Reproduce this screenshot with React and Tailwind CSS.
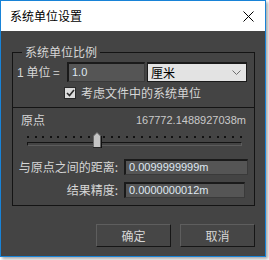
import React from 'react';

const cjk = { fontFamily: '"Noto Sans CJK SC", "Noto Sans", sans-serif' };
const num = { fontFamily: '"Liberation Sans", Arial, sans-serif' };

const ticks = Array.from({ length: 29 });

const App = () => {
  return (
    <div className="w-[269px] h-[260px] bg-white" style={cjk}>
      <div className="w-[266px] h-[257px] flex flex-col border border-[#1883d7] bg-[#444444] shadow-[2px_2px_3px_rgba(0,0,0,0.35)]">
        {/* title bar */}
        <div className="h-[30px] bg-white flex items-center justify-between">
          <span className="pl-[9px] text-[12px] leading-[16px] text-black">系统单位设置</span>
          <svg width="11" height="11" viewBox="0 0 11 11" className="mr-[11px]">
            <path d="M0.5 0.5 L10.5 10.5 M10.5 0.5 L0.5 10.5" stroke="#000" strokeWidth="1" fill="none" />
          </svg>
        </div>

        {/* body */}
        <div className="flex-1 flex flex-col pl-[11px] pr-[10px]">
          <fieldset className="mt-[13px] border border-[#141414] pb-[7px]">
            <legend className="ml-[9px] px-[3px] text-[12px] leading-[16px] text-[#d6d6d6]">系统单位比例</legend>

            <div className="mt-[2px] h-[20px] flex items-center">
              <span className="w-[54px] pl-[4px] text-[12px] leading-[16px] text-[#d6d6d6] whitespace-nowrap">
                <span style={num}>1</span> 单位 =
              </span>
              <div className="w-[78px] h-[20px] flex items-center bg-[#555555] border-t-2 border-l-2 border-[#1a1a1a] border-r border-b border-r-[#3a3a3a] border-b-[#3a3a3a] pl-[3px]">
                <span className="text-[11px] text-[#dfe8f2]" style={num}>1.0</span>
              </div>
              <div className="ml-[2px] w-[100px] h-[20px] flex items-center justify-between bg-[#e3e3e3] border border-[#1a1a1a] border-t-2 pl-[3px] pr-[5px]">
                <span className="text-[12px] leading-[16px] text-black">厘米</span>
                <svg width="9" height="6" viewBox="0 0 9 6">
                  <path d="M0.5 0.5 L4.5 4.5 L8.5 0.5" stroke="#6e6e6e" strokeWidth="1" fill="none" />
                </svg>
              </div>
            </div>

            <div className="mt-[5px] h-[12px] flex items-center">
              <div className="ml-[51px] w-[12px] h-[12px] bg-[#dcdcdc] border border-[#2a2a2a] flex items-center justify-center">
                <svg width="9" height="8" viewBox="0 0 9 8">
                  <path d="M1 4 L3.5 6.5 L8 1" stroke="#2b2b2b" strokeWidth="1.6" fill="none" />
                </svg>
              </div>
              <span className="ml-[5px] text-[12px] leading-[16px] text-[#d6d6d6]">考虑文件中的系统单位</span>
            </div>

            <div className="mt-[8px] border-t border-[#141414]" />

            <div className="mt-[4px] h-[16px] flex items-center justify-between pl-[8px] pr-[8px]">
              <span className="text-[12px] leading-[16px] text-[#d6d6d6]">原点</span>
              <span className="text-[11px] text-[#c9c9c9]" style={num}>167772.1488927038m</span>
            </div>

            {/* slider */}
            <div className="relative mt-[3px] h-[17px] ml-[14px] mr-[12px]">
              <div className="pt-[5px] flex justify-between">
                {ticks.map((_, i) => (
                  <span key={i} className="w-[2px] h-[2px] bg-[#111111]" />
                ))}
              </div>
              <div className="mt-[4px] h-[4px] border-t border-l border-[#141414] border-b border-b-[#5c5c5c] border-r border-r-[#5c5c5c]" />
              <svg width="9" height="16" viewBox="0 0 9 16" className="absolute left-[66px] top-[1px]">
                <path d="M0.5 15.5 L0.5 4 L4 0.5 L7.5 4 L7.5 15.5 Z" fill="#c4c4c4" stroke="#6a6a6a" strokeWidth="1" />
                <path d="M8.5 4 L8.5 16 M0 15.8 L9 15.8" stroke="#111" strokeWidth="1.2" />
              </svg>
            </div>

            <div className="mt-[11px] h-[16px] flex items-center">
              <span className="w-[111px] pr-[6px] text-right text-[12px] leading-[16px] text-[#d6d6d6] whitespace-nowrap">与原点之间的距离:</span>
              <div className="w-[124px] h-[16px] flex items-center bg-[#555555] border-t-2 border-l-2 border-[#1a1a1a] border-r border-b border-r-[#3a3a3a] border-b-[#3a3a3a] pl-[3px]">
                <span className="text-[11px] text-[#dfe8f2]" style={num}>0.0099999999m</span>
              </div>
            </div>

            <div className="mt-[7px] h-[16px] flex items-center">
              <span className="w-[111px] pr-[6px] text-right text-[12px] leading-[16px] text-[#d6d6d6] whitespace-nowrap">结果精度:</span>
              <div className="w-[121px] h-[16px] flex items-center bg-[#555555] border-t-2 border-l-2 border-[#1a1a1a] border-r border-b border-r-[#3a3a3a] border-b-[#3a3a3a] pl-[3px]">
                <span className="text-[11px] text-[#dfe8f2]" style={num}>0.0000000012m</span>
              </div>
            </div>
          </fieldset>

          <div className="mt-[18px] flex justify-end gap-[9px]">
            <button className="w-[75px] h-[23px] bg-[#464646] border border-t-[#5e5e5e] border-l-[#5e5e5e] border-r-[#161616] border-b-[#161616] text-[12px] leading-[16px] text-[#d6d6d6]">确定</button>
            <button className="w-[75px] h-[23px] bg-[#464646] border border-t-[#5e5e5e] border-l-[#5e5e5e] border-r-[#161616] border-b-[#161616] text-[12px] leading-[16px] text-[#d6d6d6]">取消</button>
          </div>
        </div>
      </div>
    </div>
  );
};

export default App;
